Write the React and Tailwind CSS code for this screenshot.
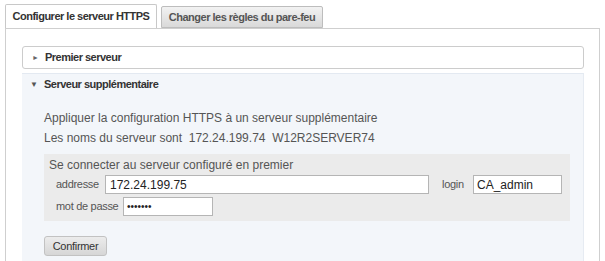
export default function App() {
  const font = { fontFamily: '"Liberation Sans", Arial, sans-serif' };
  return (
    <div className="w-[605px] h-[261px] overflow-hidden bg-white" style={font}>
      <div className="ml-[5px] mt-[5px] w-[595px]">
        {/* tabs */}
        <div className="flex items-end gap-[4px] h-[23px]">
          <div className="relative z-10 w-[152px] h-[24px] border border-[#c8c8c8] border-b-0 bg-white rounded-t-[2px] flex items-center justify-center whitespace-nowrap text-[11px] font-bold tracking-[-0.5px] text-[#333] pb-[1px]">
            Configurer le serveur HTTPS
          </div>
          <div className="w-[162px] h-[22px] border border-[#bdbdbd] rounded-t-[2px] bg-gradient-to-b from-[#f2f2f2] to-[#d9d9d9] flex items-center justify-center whitespace-nowrap text-[11px] font-bold tracking-[-0.5px] text-[#555]">
            Changer les règles du pare-feu
          </div>
        </div>
        {/* panel */}
        <div className="border border-[#cfcfcf] h-[240px] pl-[16px] pt-[17px]">
          <div className="w-[562px]">
            <div className="h-[23px] border border-[#cccccc] rounded-[3px] bg-white flex items-center">
              <span className="ml-[9px] mr-[6px] text-[7px] text-[#666] leading-none">►</span>
              <span className="text-[11px] font-bold tracking-[-0.5px] text-[#333] whitespace-nowrap">Premier serveur</span>
            </div>
            <div className="mt-[4px] h-[200px] bg-[#f3f6fa] border-t border-[#e3e9f1] border-r border-r-[#e6ebf2]">
              <div className="h-[21px] flex items-center">
                <span className="ml-[8px] mr-[6px] text-[8px] text-[#555] leading-none">▼</span>
                <span className="text-[11px] font-bold tracking-[-0.5px] text-[#333] whitespace-nowrap">Serveur supplémentaire</span>
              </div>
              <div className="pl-[22px] pt-[13px]">
                <div className="h-[20px] flex items-center text-[12px] text-[#555] whitespace-nowrap">
                  Appliquer la configuration HTTPS à un serveur supplémentaire
                </div>
                <div className="h-[20px] flex items-center text-[12px] text-[#555] whitespace-pre">
                  {"Les noms du serveur sont  172.24.199.74  W12R2SERVER74"}
                </div>
                <div className="mt-[6px] w-[526px] h-[67px] bg-[#ebebeb] pl-[5px] pt-[3px]">
                  <div className="h-[15px] flex items-center text-[12px] text-[#555] whitespace-nowrap">
                    Se connecter au serveur configuré en premier
                  </div>
                  <div className="mt-[3px] flex items-center h-[19px] pl-[7px]">
                    <span className="w-[49px] text-[11px] tracking-[-0.3px] text-[#555] whitespace-nowrap">addresse</span>
                    <div className="w-[324px] h-[19px] border border-[#b5b5b5] bg-white flex items-center pl-[4px] text-[12px] text-[#222]">
                      172.24.199.75
                    </div>
                    <span className="ml-[13px] w-[31px] text-[11px] tracking-[-0.3px] text-[#555] whitespace-nowrap">login</span>
                    <div className="w-[89px] h-[19px] border border-[#b5b5b5] bg-white flex items-center pl-[3px] text-[12px] text-[#222]">
                      CA_admin
                    </div>
                  </div>
                  <div className="mt-[3px] flex items-center h-[19px] pl-[7px]">
                    <span className="w-[67px] text-[11px] tracking-[-0.3px] text-[#555] whitespace-nowrap">mot de passe</span>
                    <div className="w-[90px] h-[19px] border border-[#b5b5b5] bg-white flex items-center pl-[3px] text-[10px] text-[#222] leading-none">
                      •••••••
                    </div>
                  </div>
                </div>
                <div className="mt-[15px] w-[63px] h-[20px] border border-[#c2c2c2] rounded-[3px] bg-gradient-to-b from-[#ececec] to-[#d6d6d6] flex items-center justify-center text-[11px] tracking-[-0.3px] text-[#333]">
                  Confirmer
                </div>
              </div>
            </div>
          </div>
        </div>
      </div>
    </div>
  );
}
